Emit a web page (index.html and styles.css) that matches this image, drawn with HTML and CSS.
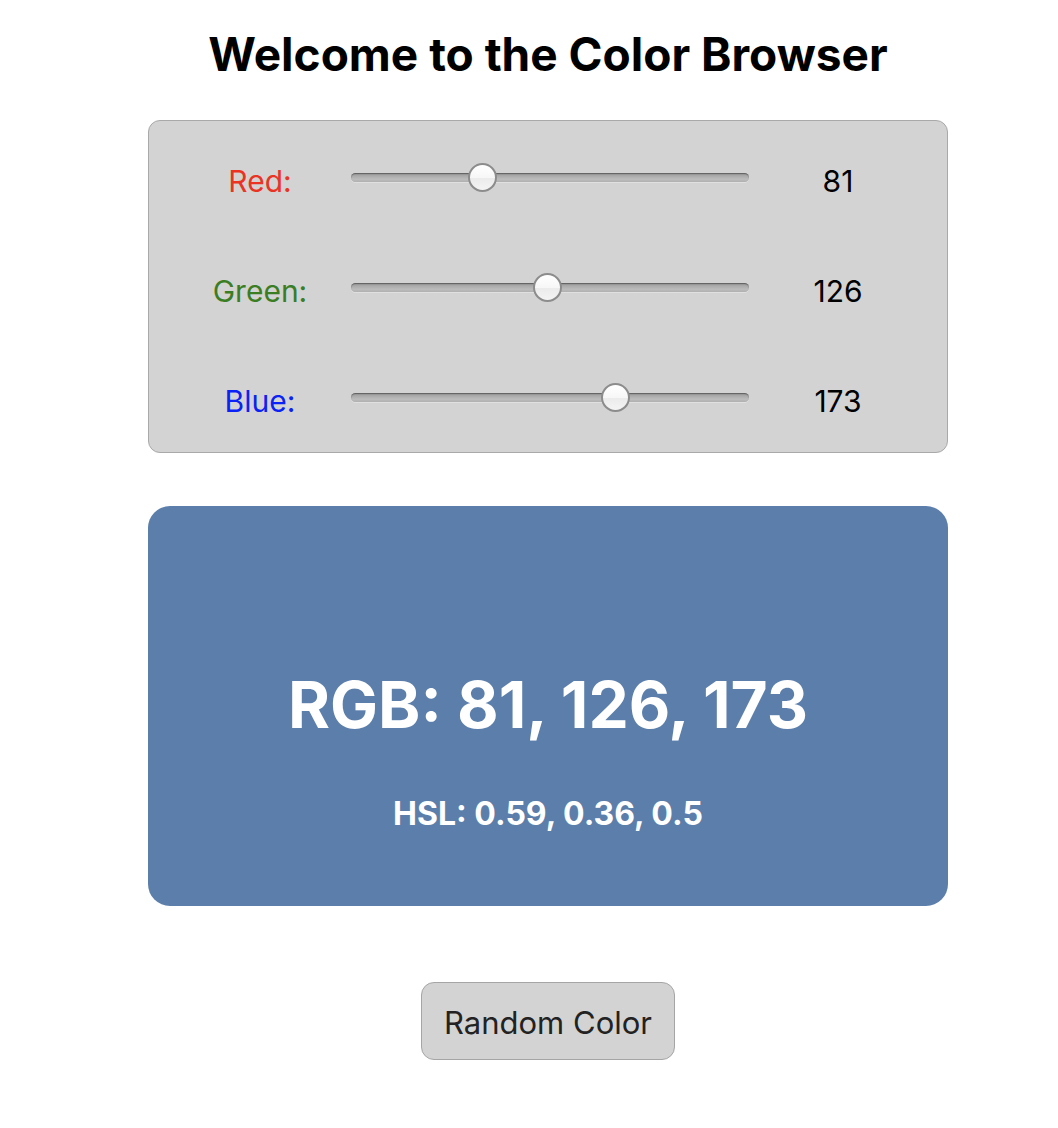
FILE: index.html
```html
<!DOCTYPE html>
<html lang="en">
<head>
<meta charset="utf-8">
<title>Color Browser</title>
<link rel="stylesheet" href="styles.css">
</head>
<body>
<div class="app">
  <h1 class="title">Welcome to the Color Browser</h1>
  <div class="panel">
    <label class="label label-red" for="r">Red:</label>
    <input class="slider" id="r" type="range" min="0" max="255" value="81">
    <span class="value">81</span>
    <label class="label label-green" for="g">Green:</label>
    <input class="slider" id="g" type="range" min="0" max="255" value="126">
    <span class="value">126</span>
    <label class="label label-blue" for="b">Blue:</label>
    <input class="slider" id="b" type="range" min="0" max="255" value="173">
    <span class="value">173</span>
  </div>
  <div class="swatch">
    <div class="rgb">RGB: 81, 126, 173</div>
    <div class="hsl">HSL: 0.59, 0.36, 0.5</div>
  </div>
  <div class="actions">
    <button class="btn" type="button">Random Color</button>
  </div>
</div>
</body>
</html>
```

FILE: styles.css
```css
html, body {
  margin: 0;
  padding: 0;
  background: #ffffff;
}

body {
  font-family: Inter, "Noto Sans", "Liberation Sans", sans-serif;
  color: #000;
}

.app {
  width: 800px;
  margin: 0 0 0 148px;
}

.title {
  margin: 26px 0 0;
  font-size: 46px;
  line-height: 56px;
  font-weight: 700;
  text-align: center;
}

.panel {
  margin-top: 38px;
  box-sizing: border-box;
  height: 333px;
  background: #d3d3d3;
  border: 1px solid #a9a9a9;
  border-radius: 12px;
  padding: 9px 22px 2px 22px;
  display: grid;
  grid-template-columns: 178px 400px 178px;
  grid-template-rows: 100px 100px 100px;
  row-gap: 10px;
  align-items: center;
}

.label {
  font-size: 30px;
  line-height: 36px;
  text-align: center;
  padding-top: 2px;
}

.label-red { color: #ea3323; }
.label-green { color: #3a7d22; }
.label-blue { color: #0a22f5; }

.value {
  font-size: 30px;
  line-height: 36px;
  text-align: center;
  padding-top: 2px;
}

.slider {
  -webkit-appearance: none;
  appearance: none;
  width: 398px;
  height: 28px;
  margin: 0 0 6px 2px;
  padding: 0;
  background: transparent;
}

.slider::-webkit-slider-runnable-track {
  height: 9px;
  border-radius: 5px;
  background: linear-gradient(#8e8e8e 0, #a9a9a9 30%, #bcbcbc 70%, #b0b0b0 100%);
  box-shadow: inset 0 1px 1px rgba(0, 0, 0, 0.35), 0 1px 0 rgba(255, 255, 255, 0.3);
}

.slider::-webkit-slider-thumb {
  -webkit-appearance: none;
  appearance: none;
  box-sizing: border-box;
  width: 29px;
  height: 29px;
  margin-top: -10px;
  border-radius: 50%;
  border: 2px solid #8c8c8c;
  background: linear-gradient(#ffffff 0, #f7f7f7 50%, #ebebeb 52%, #f4f4f4 100%);
}

.swatch {
  margin-top: 53px;
  box-sizing: border-box;
  height: 400px;
  border-radius: 22px;
  background: rgb(91, 126, 171);
  color: #ffffff;
  text-align: center;
  padding-top: 160px;
}

.rgb {
  font-size: 64px;
  line-height: 78px;
  font-weight: 700;
}

.hsl {
  margin-top: 50px;
  font-size: 32px;
  line-height: 39px;
  font-weight: 700;
}

.actions {
  margin-top: 76px;
  display: flex;
  justify-content: center;
}

.btn {
  font-family: Inter, "Noto Sans", "Liberation Sans", sans-serif;
  font-size: 31px;
  line-height: 37px;
  color: #222222;
  background: #d3d3d3;
  border: 1px solid #a5a5a5;
  border-radius: 13px;
  padding: 21px 22px 18px;
  margin: 0;
}
```
